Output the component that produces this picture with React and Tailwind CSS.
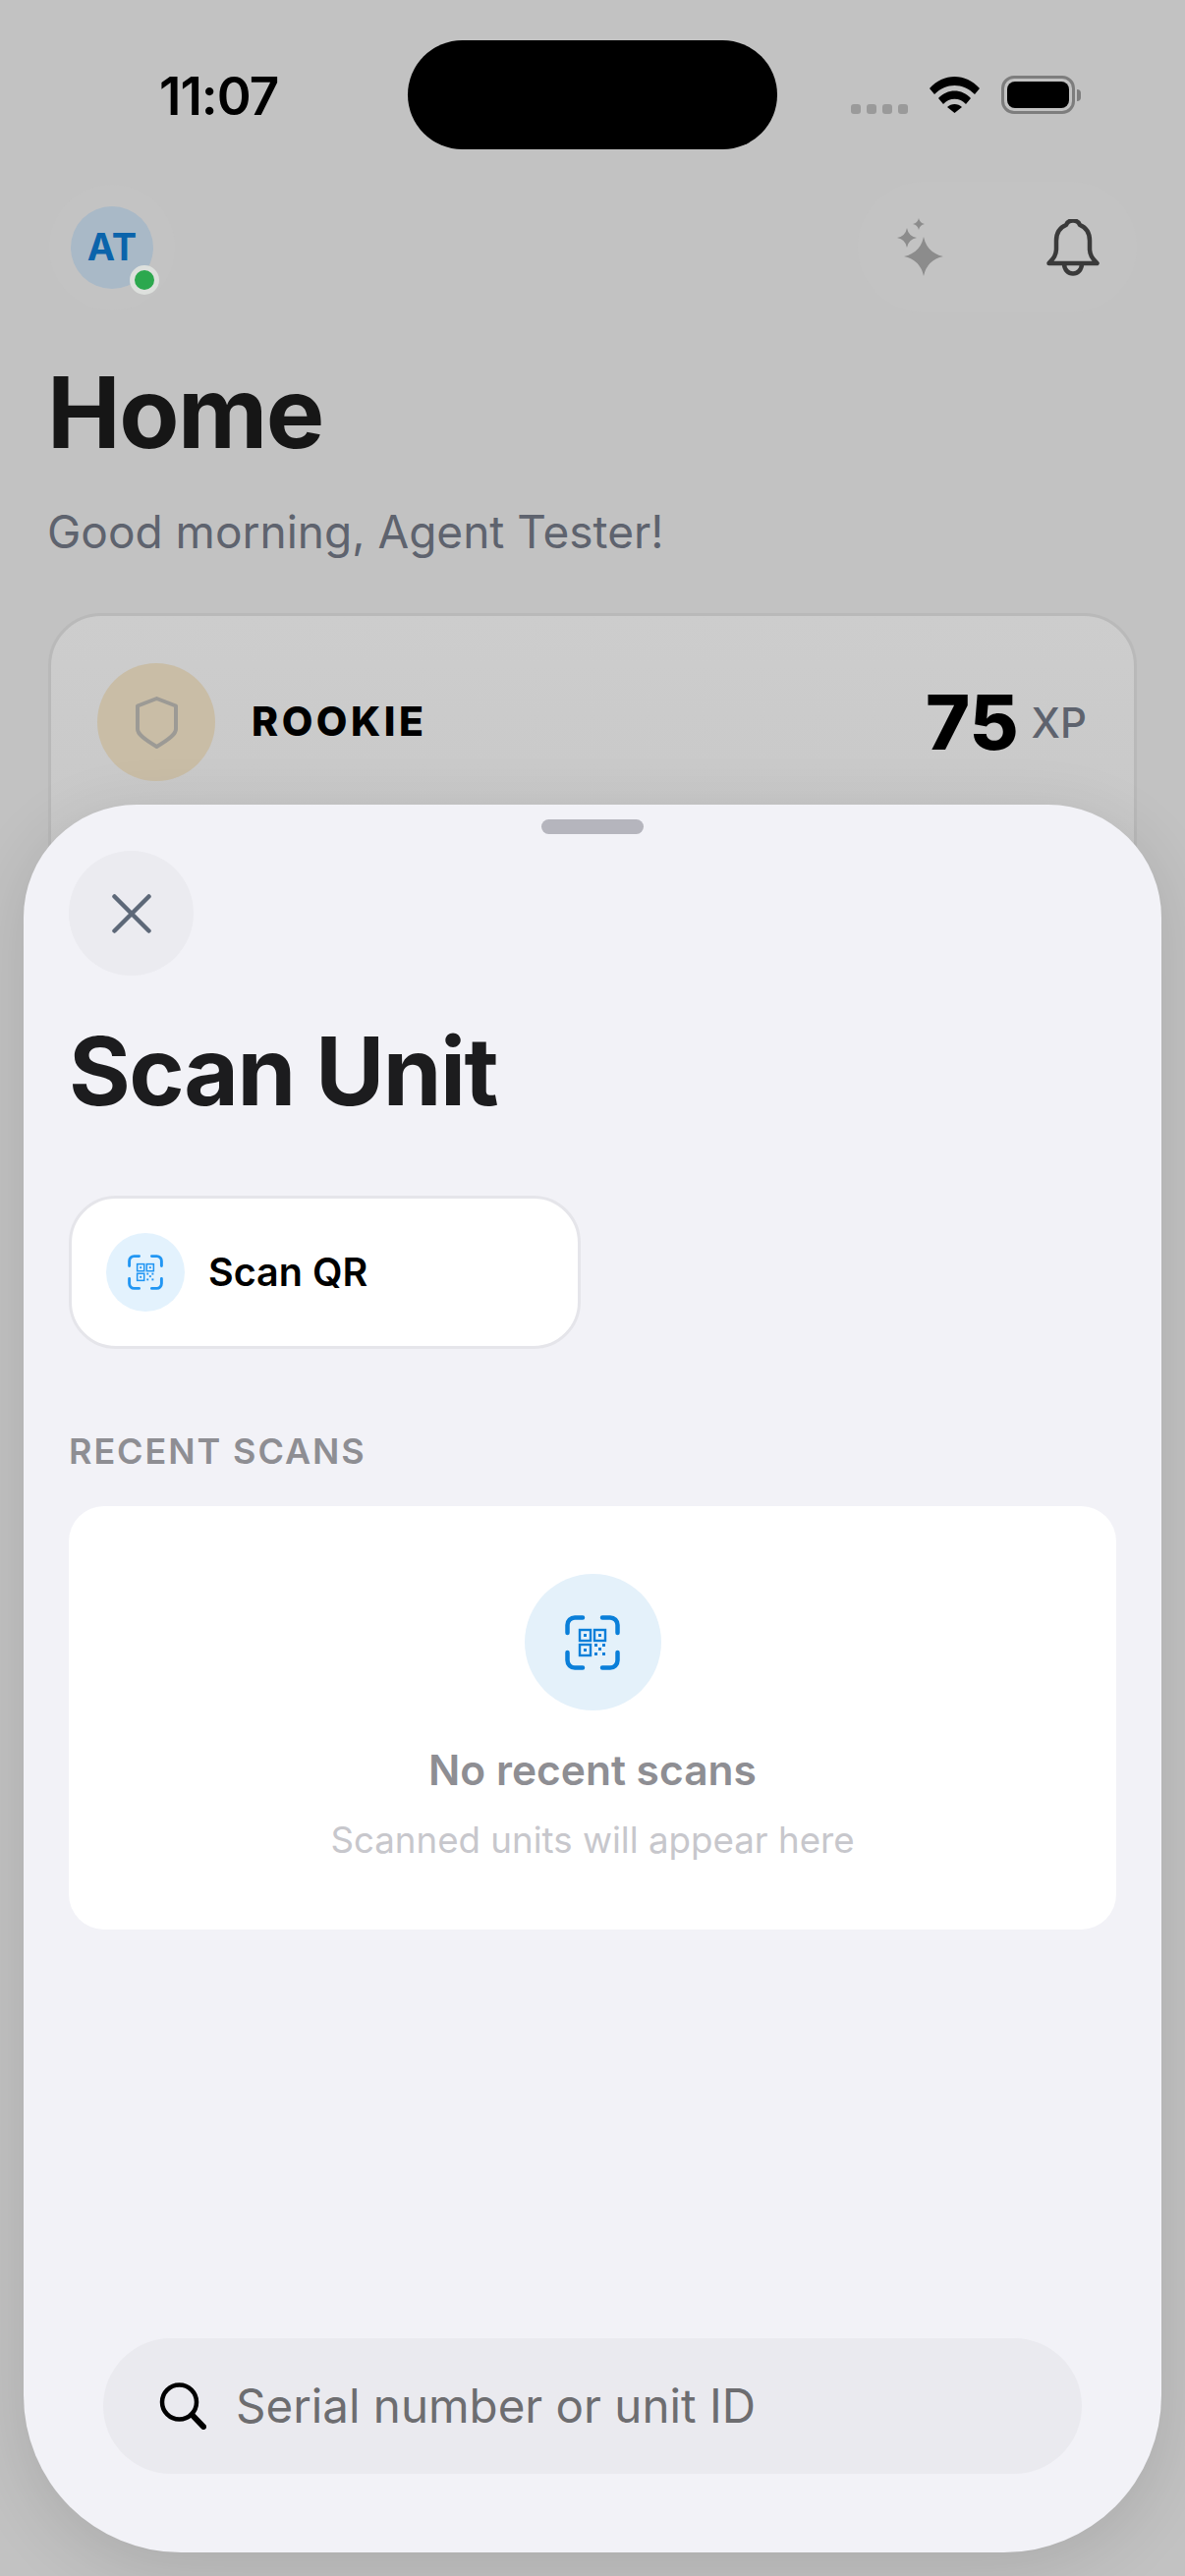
const QrScanIcon = ({ className }) => (
  <svg viewBox="0 0 56 56" fill="none" className={className}>
    {/* corner brackets */}
    <g stroke="currentColor" strokeWidth="4.500" strokeLinecap="round">
      <path d="M2.500 18V10a7.500 7.500 0 0 1 7.500-7.500h8" />
      <path d="M38 2.500h8a7.500 7.500 0 0 1 7.500 7.500v8" />
      <path d="M2.500 38v8a7.500 7.500 0 0 0 7.500 7.500h8" />
      <path d="M53.500 38v8a7.500 7.500 0 0 1-7.500 7.500h-8" />
    </g>
    {/* qr blocks */}
    <g stroke="currentColor" strokeWidth="2.400">
      <rect x="15" y="15" width="11" height="11" />
      <rect x="30" y="15" width="11" height="11" />
      <rect x="15" y="30" width="11" height="11" />
    </g>
    <g fill="currentColor">
      <rect x="19" y="19" width="3" height="3" />
      <rect x="34" y="19" width="3" height="3" />
      <rect x="19" y="34" width="3" height="3" />
      <rect x="30" y="29" width="3" height="3" />
      <rect x="38" y="29" width="3" height="3" />
      <rect x="34" y="33" width="3" height="3" />
      <rect x="30" y="38" width="3" height="3" />
      <rect x="38" y="38" width="3" height="3" />
    </g>
  </svg>
);

const StatusBar = () => (
  <div className="flex h-[111px] items-center pl-[162px] pr-[106px]">
    <span className="mt-[4px] w-[253px] text-[53px] font-semibold leading-none tracking-[-1px] text-black">11:07</span>
    <div className="h-[111px] w-[376px] rounded-full bg-black" />
    <div className="flex flex-1 items-center justify-end">
      <div className="mt-[29px] flex gap-[6px]">
        <span className="h-[10px] w-[10px] rounded-[3px] bg-[#9a9a9a]" />
        <span className="h-[10px] w-[10px] rounded-[3px] bg-[#9a9a9a]" />
        <span className="h-[10px] w-[10px] rounded-[3px] bg-[#9a9a9a]" />
        <span className="h-[10px] w-[10px] rounded-[3px] bg-[#9a9a9a]" />
      </div>
      <svg viewBox="0 0 51 37" className="ml-[22px] h-[37px] w-[51px]" fill="black">
        <path d="M0 12C14-4 37-4 51 12l-5 6C34 6 17 6 5 18z" />
        <path d="M9 22c9-10 24-10 33 0l-5 6c-6-7-17-7-23 0z" />
        <path d="M18 31c4-4 11-4 15 0l-7.5 6z" />
      </svg>
      <div className="ml-[22px] flex items-center">
        <div className="flex h-[39px] w-[75px] items-center justify-center rounded-[13px] border-[3px] border-[#7d7d7d]">
          <div className="h-[27px] w-[63px] rounded-[8px] bg-black" />
        </div>
        <div className="ml-[2px] h-[12px] w-[4px] rounded-r-full bg-[#7d7d7d]" />
      </div>
    </div>
  </div>
);

const Header = () => (
  <div className="mt-[33px] flex items-center justify-between pl-[72px] pr-[49px]">
    <div className="relative flex h-[84px] w-[84px] items-center justify-center rounded-full bg-[#a9b9c7] shadow-[0_0_0_22px_#c3c3c3]">
      <span className="text-[38px] font-bold text-[#0b64ab]">AT</span>
      <div className="absolute -bottom-[6px] -right-[6px] h-[30px] w-[30px] rounded-full border-[5px] border-[#dde0dd] bg-[#2ca84e]" />
    </div>
    <div className="flex h-[133px] w-[284px] items-center justify-between rounded-full bg-[#c3c3c3] pl-[40px] pr-[38px]">
      <svg viewBox="0 0 50 60" className="h-[60px] w-[50px]" fill="#8c8c8c">
        <path d="M27 19Q30.500 35.500 47 39 30.500 42.500 27 59 23.500 42.500 7 39 23.500 35.500 27 19z" />
        <path d="M10 10Q11.500 18.500 20 20 11.500 21.500 10 30 8.500 21.500 0 20 8.500 18.500 10 10z" />
        <path d="M22 0Q23 5 28 6 23 7 22 12 21 7 16 6 21 5 22 0z" />
      </svg>
      <svg viewBox="0 0 54 58" className="h-[58px] w-[54px]" fill="none" stroke="#3a3a3a" strokeWidth="4.500" strokeLinejoin="round">
        <path d="M2.500 45C6 41 10 38 10 30V22C10 13 15 8 20 6 22 0 32 0 34 6 39 8 44 13 44 22V30C44 38 48 41 51.500 45z" />
        <path d="M18 45C18 59 36 59 36 45" />
      </svg>
    </div>
  </div>
);

const RankCard = () => (
  <div className="mx-[49px] mt-[54px] h-[500px] rounded-[54px] border-[3px] border-[#b9b9b9] bg-gradient-to-b from-[#cdcdcd] to-[#c3c3c3] pl-[47px] pr-[48px] pt-[48px]">
    <div className="flex items-center">
      <div className="flex h-[120px] w-[120px] items-center justify-center rounded-full bg-[#c9bda6]">
        <svg viewBox="0 0 43 53" className="h-[53px] w-[43px]" fill="none" stroke="#9c9a95" strokeWidth="4" strokeLinejoin="round">
          <path d="M21.500 2 41 9.500V33C41 38 35 43 21.500 51 8 43 2 38 2 33V9.500z" />
        </svg>
      </div>
      <span className="ml-[37px] text-[41px] font-extrabold tracking-[3.500px] text-black">ROOKIE</span>
      <span className="ml-auto text-[77px] font-extrabold leading-none text-black">75</span>
      <span className="ml-[13px] text-[42px] font-medium text-[#5e636e]">XP</span>
    </div>
  </div>
);

const ScanSheet = () => (
  <div className="absolute left-[24px] top-[819px] flex h-[1779px] w-[1158px] flex-col rounded-t-[115px] rounded-b-[160px] bg-[#f2f2f7] px-[46px] pb-[80px] pt-[15px] shadow-[0_16px_70px_rgba(0,0,0,0.12)]">
    <div className="mx-auto h-[15px] w-[104px] rounded-full bg-[#b5b5bd]" />
    <button className="mt-[17px] flex h-[127px] w-[127px] items-center justify-center rounded-full bg-[#ebebf0]">
      <svg viewBox="0 0 40 40" className="h-[40px] w-[40px]" fill="none" stroke="#5d6878" strokeWidth="4.500" strokeLinecap="round">
        <path d="M2.500 2.500 37.500 37.500M37.500 2.500 2.500 37.500" />
      </svg>
    </button>
    <h2 className="mt-[39px] text-[96px] font-bold leading-[116px] tracking-[-1.500px] text-[#1c1c1e]">Scan Unit</h2>
    <button className="mt-[69px] flex h-[156px] w-[521px] items-center rounded-[48px] border-[3px] border-[#e5e5ea] bg-white pl-[35px]">
      <div className="flex h-[80px] w-[80px] items-center justify-center rounded-full bg-[#e3f2fd]">
        <QrScanIcon className="h-[36px] w-[36px] text-[#2196f3]" />
      </div>
      <span className="ml-[24px] mt-[2px] text-[39.500px] font-semibold text-black">Scan QR</span>
    </button>
    <p className="mt-[82px] text-[36px] font-semibold leading-[44px] tracking-[1.900px] text-[#8e8e93]">RECENT SCANS</p>
    <div className="mt-[34px] flex h-[431px] w-[1066px] flex-col items-center rounded-[36px] bg-white pt-[69px]">
      <div className="flex h-[139px] w-[139px] items-center justify-center rounded-full bg-[#e4f1fa]">
        <QrScanIcon className="h-[56px] w-[56px] text-[#0a7fd9]" />
      </div>
      <p className="mt-[34px] text-[42.500px] font-semibold leading-[54px] text-[#8e8e93]">No recent scans</p>
      <p className="mt-[21px] text-[36.700px] leading-[46px] text-[#c7c7cc]">Scanned units will appear here</p>
    </div>
    <div className="mx-[35px] mt-auto flex h-[138px] items-center rounded-full bg-[#eaeaef] pl-[57px]">
      <svg viewBox="0 0 48 48" className="h-[48px] w-[48px]" fill="none" stroke="black" strokeLinecap="round">
        <circle cx="20.500" cy="20" r="17.500" strokeWidth="4.500" />
        <path d="M33.500 33 45 45" strokeWidth="6" />
      </svg>
      <span className="ml-[30px] text-[47.500px] text-[#6d6d70]">Serial number or unit ID</span>
    </div>
  </div>
);

export default function App() {
  return (
    <div className="relative h-[2622px] w-[1206px] overflow-hidden bg-[#c2c2c2] font-['Inter',sans-serif]">
      <div className="pt-[41px]">
        <StatusBar />
        <Header />
        <h1 className="mt-[42px] pl-[48px] text-[100px] font-bold leading-[120px] tracking-[-1.500px] text-[#161616]">Home</h1>
        <p className="mt-[32px] pl-[48px] text-[46px] leading-[58px] text-[#5e636e]">Good morning, Agent Tester!</p>
        <RankCard />
      </div>
      <ScanSheet />
    </div>
  );
}
